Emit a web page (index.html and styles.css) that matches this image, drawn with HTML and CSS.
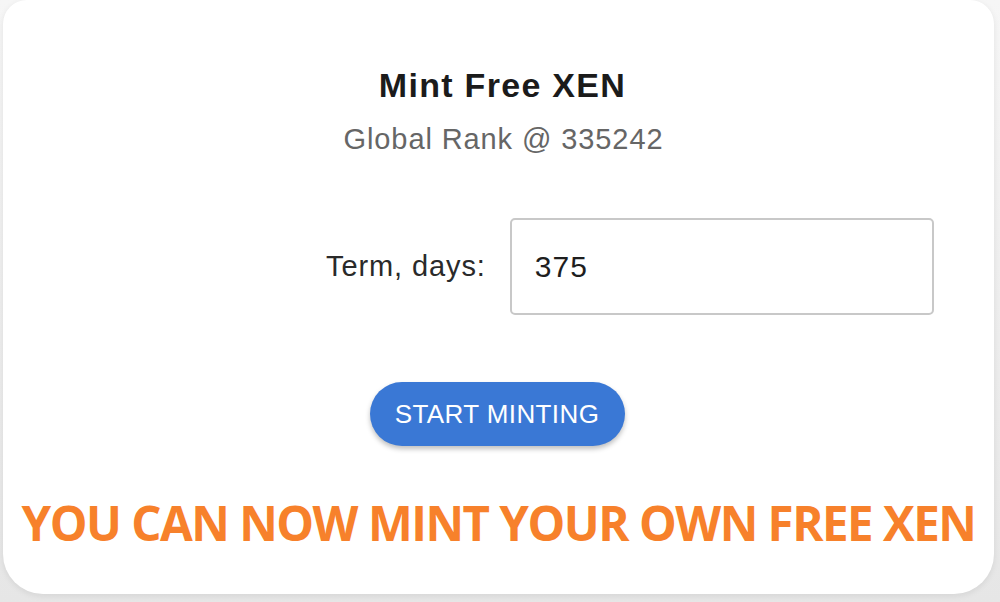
FILE: index.html
```html
<!DOCTYPE html>
<html>
<head>
<meta charset="utf-8">
<link rel="stylesheet" href="styles.css">
</head>
<body>
<div class="card">
  <h1 class="title">Mint Free XEN</h1>
  <div class="rank">Global Rank @ 335242</div>
  <div class="term-row">
    <label class="term-label">Term, days:</label>
    <div class="term-input">375</div>
  </div>
  <div class="btn-row">
    <button class="btn">START MINTING</button>
  </div>
  <div class="banner">YOU CAN NOW MINT YOUR OWN FREE XEN</div>
</div>
</body>
</html>
```
FILE: styles.css
```css
html, body {
  margin: 0;
  padding: 0;
}
body {
  width: 1000px;
  height: 602px;
  background: linear-gradient(#f6f6f6, #e6e6e6);
  overflow: hidden;
  font-family: "Liberation Sans", Arial, sans-serif;
}
.card {
  box-sizing: border-box;
  margin: 0 6px 0 3px;
  height: 594px;
  background: #fff;
  border-radius: 24px 24px 40px 40px;
  box-shadow: 0 2px 6px rgba(0,0,0,0.08);
  display: flex;
  flex-direction: column;
  align-items: center;
  padding-top: 65px;
}
.title {
  margin: 0 0 0 8px;
  font-size: 34px;
  letter-spacing: 1.3px;
  font-weight: bold;
  color: #1b1b1b;
  line-height: 40px;
}
.rank {
  margin-top: 17px;
  font-size: 29px;
  letter-spacing: 0.9px;
  color: #666;
  line-height: 34px;
  margin-left: 10px;
}
.term-row {
  align-self: stretch;
  display: flex;
  align-items: center;
  padding-left: 323px;
  margin-top: 62px;
  gap: 24px;
}
.term-label {
  font-size: 29px;
  letter-spacing: 0.9px;
  color: #2a2a2a;
}
.term-input {
  box-sizing: border-box;
  width: 424px;
  height: 97px;
  border: 2px solid #c8c8c8;
  border-radius: 5px;
  padding-left: 23px;
  display: flex;
  align-items: center;
  font-size: 30px;
  letter-spacing: 1px;
  color: #1e1e1e;
}
.btn-row {
  margin-top: 67px;
  display: flex;
  justify-content: center;
}
.btn {
  width: 255px;
  height: 64px;
  border: none;
  border-radius: 32px;
  background: #3a78d5;
  color: #fff;
  font-family: "Liberation Sans", Arial, sans-serif;
  font-size: 26px;
  letter-spacing: 0.4px;
  box-shadow: 0 3px 5px rgba(0,0,0,0.25);
  margin-left: -3px;
}
.banner {
  margin-top: 47px;
  font-family: "Open Sans", sans-serif;
  font-weight: 700;
  font-size: 47.5px;
  letter-spacing: -1.5px;
  color: #f7812b;
  line-height: 60px;
  white-space: nowrap;
}
```
